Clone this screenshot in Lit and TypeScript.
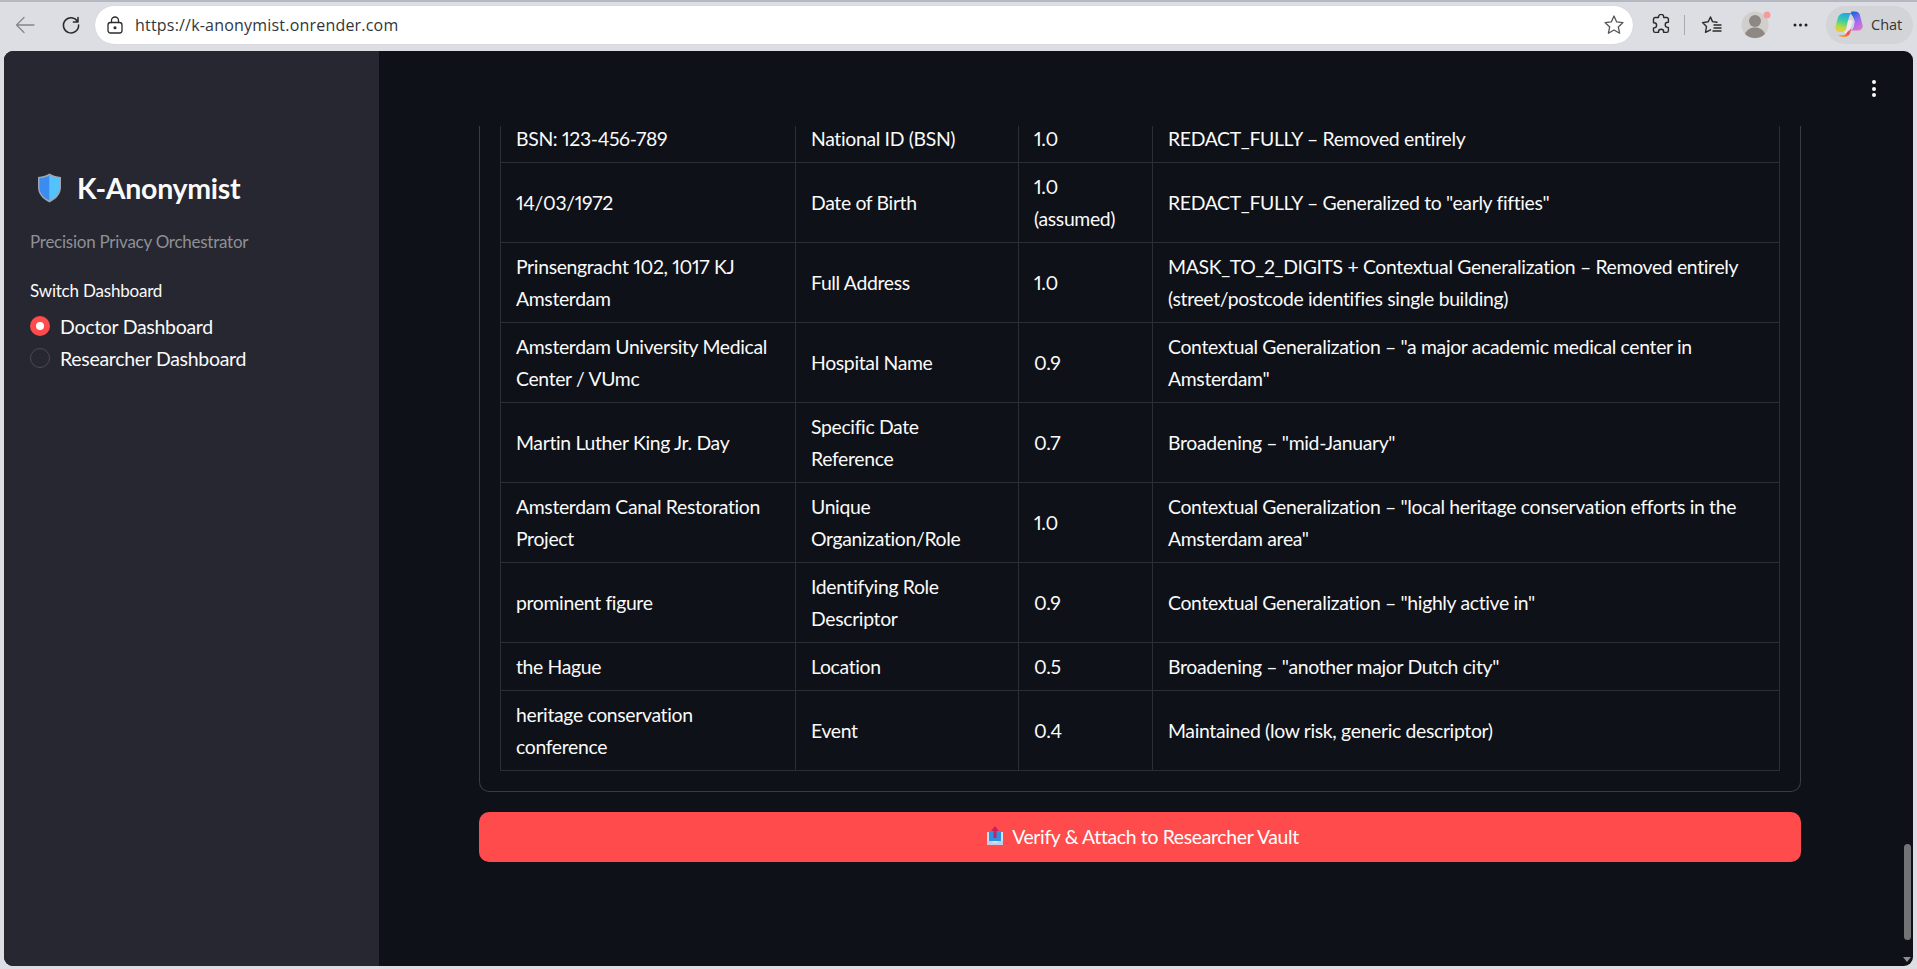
import { LitElement, html, css, svg } from 'lit';
import { customElement } from 'lit/decorators.js';

const ROWS: [string, string, string, string][] = [
  ['BSN: 123-456-789', 'National ID (BSN)', '1.0', 'REDACT_FULLY – Removed entirely'],
  ['14/03/1972', 'Date of Birth', '1.0\n(assumed)', 'REDACT_FULLY – Generalized to "early fifties"'],
  ['Prinsengracht 102, 1017 KJ\nAmsterdam', 'Full Address', '1.0', 'MASK_TO_2_DIGITS + Contextual Generalization – Removed entirely\n(street/postcode identifies single building)'],
  ['Amsterdam University Medical\nCenter / VUmc', 'Hospital Name', '0.9', 'Contextual Generalization – "a major academic medical center in\nAmsterdam"'],
  ['Martin Luther King Jr. Day', 'Specific Date\nReference', '0.7', 'Broadening – "mid-January"'],
  ['Amsterdam Canal Restoration\nProject', 'Unique\nOrganization/Role', '1.0', 'Contextual Generalization – "local heritage conservation efforts in the\nAmsterdam area"'],
  ['prominent figure', 'Identifying Role\nDescriptor', '0.9', 'Contextual Generalization – "highly active in"'],
  ['the Hague', 'Location', '0.5', 'Broadening – "another major Dutch city"'],
  ['heritage conservation\nconference', 'Event', '0.4', 'Maintained (low risk, generic descriptor)'],
];

const stroke = (w: number, h: number, body: unknown, cls = '') => html`<svg class=${cls} width=${w} height=${h} viewBox="0 0 ${w} ${h}" fill="none" stroke="#2b2b2b" stroke-width="1.3" stroke-linecap="round" stroke-linejoin="round">${body}</svg>`;

@customElement('app-root')
export class AppRoot extends LitElement {
  static styles = css`
    :host { display: block; width: 1917px; height: 969px; overflow: hidden; background: #dcdee3; font-family: "Lato", "Noto Sans", sans-serif; }
    svg { flex: none; display: block; }
    .top-line { height: 2px; background: #b4b8c0; }
    .toolbar { height: 49px; display: flex; align-items: center; padding: 0 4px 4px 15px; box-sizing: border-box; }
    .nav-back { margin-right: 26px; }
    .nav-reload { margin-right: 14px; }
    .address { width: 1538px; height: 38px; flex: none; background: #fff; border-radius: 19px; display: flex; align-items: center; padding: 0 8px 0 12px; box-sizing: border-box; box-shadow: 0 0 1px #b9bbc0; }
    .url { margin-left: 12px; font: 16px "Open Sans", sans-serif; letter-spacing: 0.2px; color: #33363b; flex: 1; }
    .tools { display: flex; align-items: center; margin-left: 18px; }
    .divider { width: 1px; height: 20px; background: #a9abb0; margin: 0 16px 0 13px; }
    .avatar { margin: 0 22px 0 18px; }
    .dots { margin-right: 18px; }
    .chat { width: 87px; height: 38px; border-radius: 19px; background: #d3d4d7; display: flex; align-items: center; padding-left: 9px; gap: 8px; box-sizing: border-box; font: 14.5px "Open Sans", sans-serif; color: #333; }
    .window { margin: 0 4px 3px 4px; height: 915px; display: flex; border-radius: 9px; overflow: hidden; background: #0e1117; color: #fafafa; }
    .sidebar { width: 375px; flex: none; background: #262730; box-sizing: border-box; padding: 122px 0 0 26px; }
    .brand { display: flex; align-items: center; gap: 15px; margin-left: 7px; height: 30px; }
    .brand h1 { margin: 0; font-size: 28.5px; font-weight: 700; line-height: 32px; letter-spacing: -0.3px; }
    .tagline { margin: 28px 0 0; font-size: 17px; line-height: 22px; color: #8f9096; letter-spacing: -0.25px; }
    .switch { margin: 27px 0 0; font-size: 17px; line-height: 22px; letter-spacing: -0.2px; }
    .radios { margin-top: 14px; display: flex; flex-direction: column; gap: 12px; }
    .radio { display: flex; align-items: center; gap: 10px; height: 20px; font-size: 19.5px; letter-spacing: -0.3px; }
    .dot { width: 20px; height: 20px; border-radius: 50%; box-sizing: border-box; border: 1px solid #4a4b55; background: #262730; display: flex; align-items: center; justify-content: center; }
    .dot.on { background: #ff4b4b; border: none; }
    .dot.on::after { content: ''; width: 8px; height: 8px; border-radius: 50%; background: #fff; }
    .main { flex: 1; display: flex; flex-direction: column; position: relative; min-width: 0; }
    .header { height: 75px; flex: none; display: flex; justify-content: flex-end; padding: 29px 37px 0 0; box-sizing: border-box; }
    .kebab { display: flex; flex-direction: column; gap: 2.6px; }
    .kebab i { width: 4px; height: 4px; border-radius: 50%; background: #fafafa; display: block; }
    .scroll { flex: 1; overflow: hidden; padding: 0 112px 0 100px; }
    .card { border: 1px solid #3a3c42; border-top: none; border-radius: 0 0 10px 10px; padding: 0 20px 20px; margin-top: -12px; }
    table { width: 1280px; border-collapse: collapse; table-layout: fixed; font-size: 19.4px; line-height: 32px; letter-spacing: -0.34px; font-variant-numeric: proportional-nums; }
    td { border: 1px solid #2b2e34; padding: 7.5px 15px; white-space: pre-line; vertical-align: middle; box-sizing: border-box; }
    .action { margin-top: 20px; height: 50px; width: 1322px; box-sizing: border-box; border: none; border-radius: 10px; background: #ff4b4b; color: #fff; display: flex; align-items: center; justify-content: center; gap: 8px; font: inherit; font-size: 19.4px; letter-spacing: -0.34px; padding: 0 0 2px 5px; }
    .thumb { position: absolute; right: 2px; top: 793px; width: 7px; height: 96px; border-radius: 4px; background: #737476; }
    .arrow { position: absolute; right: 2px; bottom: 4px; width: 0; height: 0; border-left: 4px solid transparent; border-right: 4px solid transparent; border-top: 5px solid #8d8e90; }
  `;

  render() {
    return html`
      <div class="top-line"></div>
      <div class="toolbar">
        ${stroke(20, 18, svg`<path stroke="#85878c" d="M19 9H1.500M9 1.500 1.500 9 9 16.500"/>`, 'nav-back')}
        ${stroke(20, 20, svg`<path stroke-width="1.500" d="M16.600 6.600A7.600 7.600 0 1 0 17.600 10M17 2.500v4.600h-4.600"/>`, 'nav-reload')}
        <div class="address">
          ${stroke(16, 18, svg`<rect x="1" y="6.500" width="14" height="10.500" rx="2.500"/><path d="M4.500 6.500V4.500a3.500 3.500 0 0 1 7 0v2"/><circle cx="8" cy="11.700" r=".9" fill="#2b2b2b"/>`)}
          <span class="url">https://k-anonymist.onrender.com</span>
          ${stroke(22, 22, svg`<path stroke="#555" d="M11 2l2.700 5.900 6.300.7-4.700 4.300 1.300 6.300-5.600-3.200-5.600 3.200 1.300-6.300L2 8.600l6.300-.7z"/>`)}
        </div>
        <div class="tools">
          ${stroke(20, 21, svg`<path stroke-width="1.400" d="M7.500 3.500V3a2.600 2.600 0 0 1 5.200 0v.5h3a1.700 1.700 0 0 1 1.700 1.700v3h-.6a2.600 2.600 0 0 0 0 5.200h.6v3.300a1.700 1.700 0 0 1-1.700 1.700h-3v-.5a2.600 2.600 0 0 0-5.200 0v.5H4.200a1.700 1.700 0 0 1-1.700-1.700v-2.800H3a2.600 2.600 0 0 0 0-5.200h-.5V5.200a1.700 1.700 0 0 1 1.700-1.700z"/>`)}
          <span class="divider"></span>
          ${stroke(22, 20, svg`<path stroke-width="1.400" d="M16 7.200l-4.500-.6L9.500 2 7.200 6.800 1.500 7.600l4 3.900-1 5.800 5-2.500M13 10h7M13 13h7M12 16h8"/>`)}
          <svg class="avatar" width="30" height="30" viewBox="0 0 30 30"><circle cx="14" cy="15" r="13.500" fill="#d0cfcb"/><circle cx="14" cy="11" r="6" fill="#8d8884"/><path d="M4 24c2-5 6-6.500 10-6.500s8 1.500 10 6.500c-2.500 2.500-6 4-10 4s-7.500-1.500-10-4z" fill="#8d8884"/><circle cx="26" cy="5" r="3.500" fill="#f99a9a"/></svg>
          <svg class="dots" width="15" height="4" viewBox="0 0 15 4"><circle cx="2" cy="2" r="1.500" fill="#222"/><circle cx="7.500" cy="2" r="1.500" fill="#222"/><circle cx="13" cy="2" r="1.500" fill="#222"/></svg>
          <div class="chat">
            <svg width="28" height="27" viewBox="0 0 28 27">
              <defs>
                <linearGradient id="cpa" x1="0.500" y1="0" x2="0.300" y2="1"><stop offset="0" stop-color="#1fa8e8"/><stop offset=".45" stop-color="#49cf9a"/><stop offset=".75" stop-color="#b6dc3e"/><stop offset="1" stop-color="#f8c53a"/></linearGradient>
                <linearGradient id="cpb" x1="0.300" y1="0" x2="0.700" y2="1"><stop offset="0" stop-color="#1d63dc"/><stop offset=".45" stop-color="#8f6df2"/><stop offset="1" stop-color="#e86fd2"/></linearGradient>
                <linearGradient id="cpc" x1="0.600" y1="0" x2="0.400" y2="1"><stop offset="0" stop-color="#f56a9a"/><stop offset=".6" stop-color="#f0503f"/><stop offset="1" stop-color="#f7a23c"/></linearGradient>
              </defs>
              <path d="M10 2h7.500c-1.800.5-2.800 2-3.400 4L11 17.500c-.6 2.200-1.800 3.500-4.300 3.500H5c-3.200 0-5.200-2.500-4.500-5.500L3 6.500C3.800 3.800 6.500 2 10 2z" fill="url(#cpa)"/>
              <path d="M15.500 .5H20c2.800 0 4.400 1.500 5 4l2.500 9.500c.7 3-1.200 5.500-4.500 5.500h-7.500c1.800-.5 2.800-2 3.300-3.800l1-5c-.8-3-2-6-3.500-7.500-.4-1.300-.2-2.200.2-2.700z" fill="url(#cpb)"/>
              <path d="M13 9.500c2.300-1 3.800-.6 4.700.5-.6 2.300-1.400 5.500-2.400 8.500-.7 2-1.500 3.300-3 4.500L8.500 21c1.700-.5 2.500-1.600 3-3.300z" fill="#f4e6ee"/>
              <path d="M16.500 17c-.6 4-2.300 9-6.500 9H7.500c-1.500 0-3-.5-4-1.700H8c2.300 0 3.500-1.400 4.200-3.300z" fill="url(#cpc)"/>
            </svg>
            <span>Chat</span>
          </div>
        </div>
      </div>
      <div class="window">
        <aside class="sidebar">
          <div class="brand">
            <svg width="25" height="30" viewBox="0 0 25 30">
              <path d="M12.500 .5c3 2 6.500 3 11.500 3.500v10c0 7-4.500 12-11.500 15.500C5.500 26 1 21 1 14V4C6 3.500 9.500 2.500 12.500 .5z" fill="#9ea6b3"/>
              <path d="M12.500 2.500v25C6 24.500 2.500 20 2.500 14V5.300c4-.4 7.300-1.300 10-2.800z" fill="#3b8bf0"/>
              <path d="M12.500 2.500c2.700 1.500 6 2.400 10 2.800V14c0 6-3.500 10.500-10 13.500z" fill="#55c3fb"/>
            </svg>
            <h1>K-Anonymist</h1>
          </div>
          <p class="tagline">Precision Privacy Orchestrator</p>
          <p class="switch">Switch Dashboard</p>
          <div class="radios">
            <div class="radio"><span class="dot on"></span>Doctor Dashboard</div>
            <div class="radio"><span class="dot"></span>Researcher Dashboard</div>
          </div>
        </aside>
        <main class="main">
          <div class="header"><div class="kebab"><i></i><i></i><i></i></div></div>
          <div class="scroll">
            <div class="card">
              <table>
                <colgroup><col style="width:295px"><col style="width:223px"><col style="width:134px"><col></colgroup>
                ${ROWS.map((r) => html`<tr>${r.map((c) => html`<td>${c}</td>`)}</tr>`)}
              </table>
            </div>
            <button class="action">
              <svg width="18" height="20" viewBox="0 0 18 20">
                <path d="M1 6h16v13H1z" fill="#d8def0"/>
                <path d="M3 6h12v9H3z" fill="#2f8fe0"/>
                <path d="M1 15h5l1 2h4l1-2h5v4H1z" fill="#c4cde6"/>
                <path d="M9 0l4 5h-2.500v7h-3V5H5z" fill="#c9235f"/>
              </svg>
              <span>Verify &amp; Attach to Researcher Vault</span>
            </button>
          </div>
          <div class="thumb"></div>
          <div class="arrow"></div>
        </main>
      </div>
    `;
  }
}
